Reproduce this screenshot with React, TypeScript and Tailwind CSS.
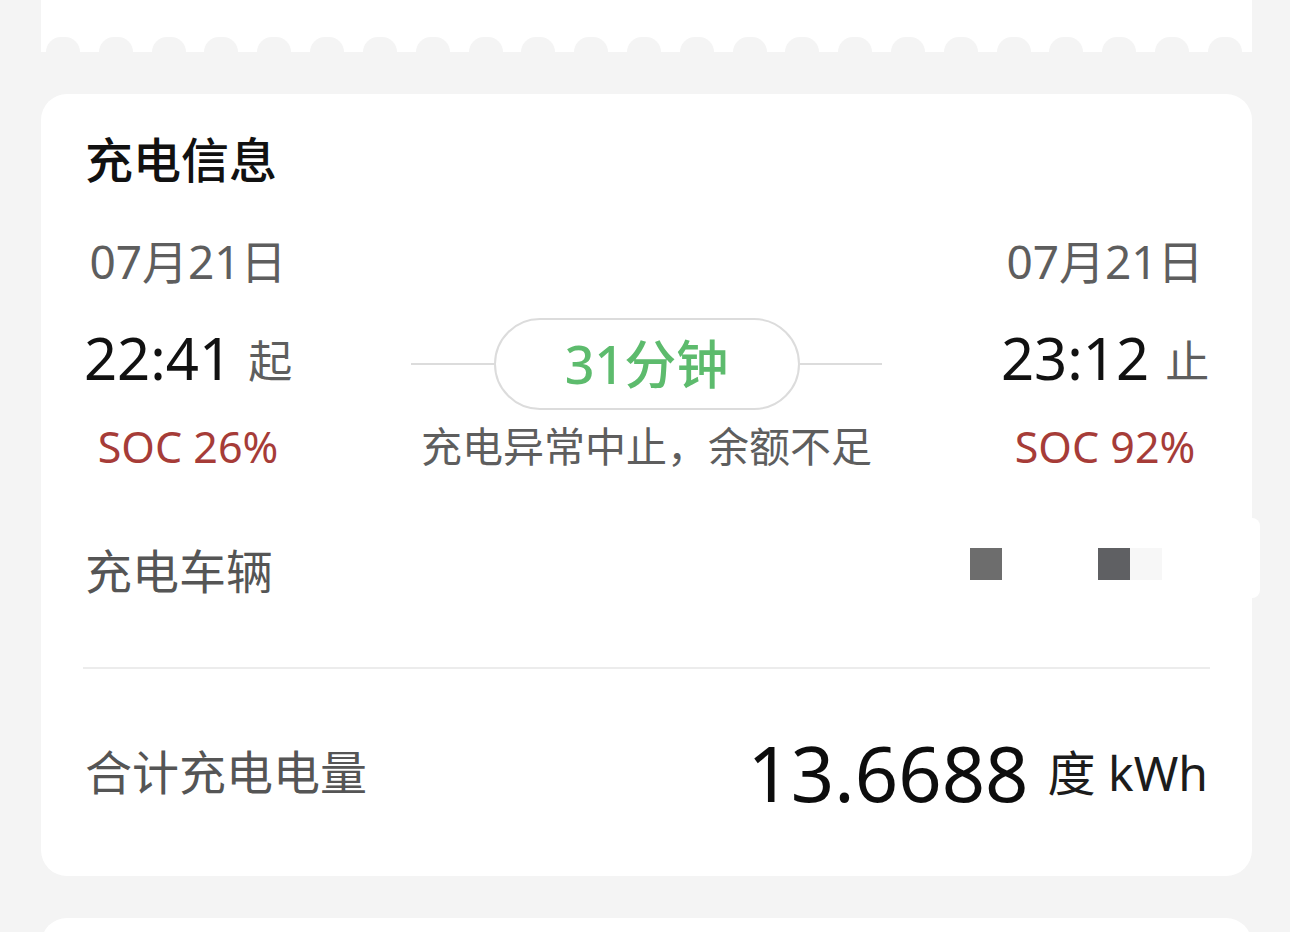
const font = { fontFamily: '"Noto Sans", "Noto Sans CJK SC", sans-serif' };

function Scallops() {
  return (
    <div className="flex h-[52px] flex-col justify-end bg-white">
      <div className="flex items-end justify-between pl-[5px] pr-[10px]">
        {Array.from({ length: 23 }).map((_, i) => (
          <div key={i} className="h-[15px] w-[34px] rounded-t-full bg-[#f4f4f4]" />
        ))}
      </div>
    </div>
  );
}

function TimeColumn({
  date,
  time,
  tag,
  soc,
}: {
  date: string;
  time: string;
  tag: string;
  soc: string;
}) {
  return (
    <div className="flex w-[206px] flex-col items-center">
      <div className="flex h-[60px] items-center text-[46px] leading-none text-[#5e5e5e]">{date}</div>
      <div className="flex h-[134px] items-center">
        <span className="text-[58px] leading-none text-[#111]">{time}</span>
        <span className="ml-[16px] mt-[6px] text-[44px] leading-none text-[#5e5e5e]">{tag}</span>
      </div>
      <div className="flex h-[42px] items-center text-[43px] leading-none text-[#a63c38]">{soc}</div>
    </div>
  );
}

export default function App() {
  return (
    <div className="min-h-[932px] overflow-hidden bg-[#f4f4f4] pl-[41px] pr-[38px]" style={font}>
      <Scallops />

      <div className="relative mt-[42px] rounded-[26px] bg-white px-[44px] pt-[42px]">
        <h2 className="text-[48px] font-medium leading-none text-[#111]">充电信息</h2>

        <div className="mt-[47px] flex">
          <TimeColumn date="07月21日" time="22:41" tag="起" soc="SOC 26%" />

          <div className="flex flex-1 flex-col items-center">
            <div className="mt-[87px] flex w-[471px] items-center">
              <div className="h-[2px] flex-1 bg-[#dcdcdc]" />
              <div className="flex h-[92px] w-[306px] items-center justify-center rounded-full border-2 border-[#dcdcdc]">
                <span className="text-[52px] font-medium leading-none text-[#5dbb6d]">31分钟</span>
              </div>
              <div className="h-[2px] flex-1 bg-[#dcdcdc]" />
            </div>
            <div className="mt-[15px] flex h-[42px] items-center whitespace-nowrap text-[41px] leading-none text-[#5e5e5e]">
              充电异常中止，余额不足
            </div>
          </div>

          <TimeColumn date="07月21日" time="23:12" tag="止" soc="SOC 92%" />
        </div>

        <div className="mt-[54px] flex h-[100px] items-center justify-between">
          <span className="text-[47px] leading-none text-[#555]">充电车辆</span>
          <div className="mb-[14px] mr-[46px] flex items-center">
            <div className="h-[32px] w-[32px] bg-[#6d6d6d]" />
            <div className="ml-[96px] h-[32px] w-[32px] bg-[#5f6063]" />
            <div className="h-[32px] w-[32px] bg-[#f7f7f7]" />
          </div>
        </div>

        <div className="-mx-[2px] mt-[46px] h-[2px] bg-[#ececec]" />

        <div className="flex h-[207px] items-center justify-between">
          <span className="text-[47px] leading-none text-[#555]">合计充电电量</span>
          <div className="flex items-center">
            <span className="text-[76px] leading-none text-[#0d0d0d]">13.6688</span>
            <span className="ml-[19px] text-[48px] leading-none text-[#1c1c1c]">度 kWh</span>
          </div>
        </div>

        <div className="absolute -right-[8px] top-[424px] h-[80px] w-[10px] rounded-r-lg bg-white" />
      </div>

      <div className="mt-[42px] h-[60px] rounded-t-[26px] bg-white" />
    </div>
  );
}
